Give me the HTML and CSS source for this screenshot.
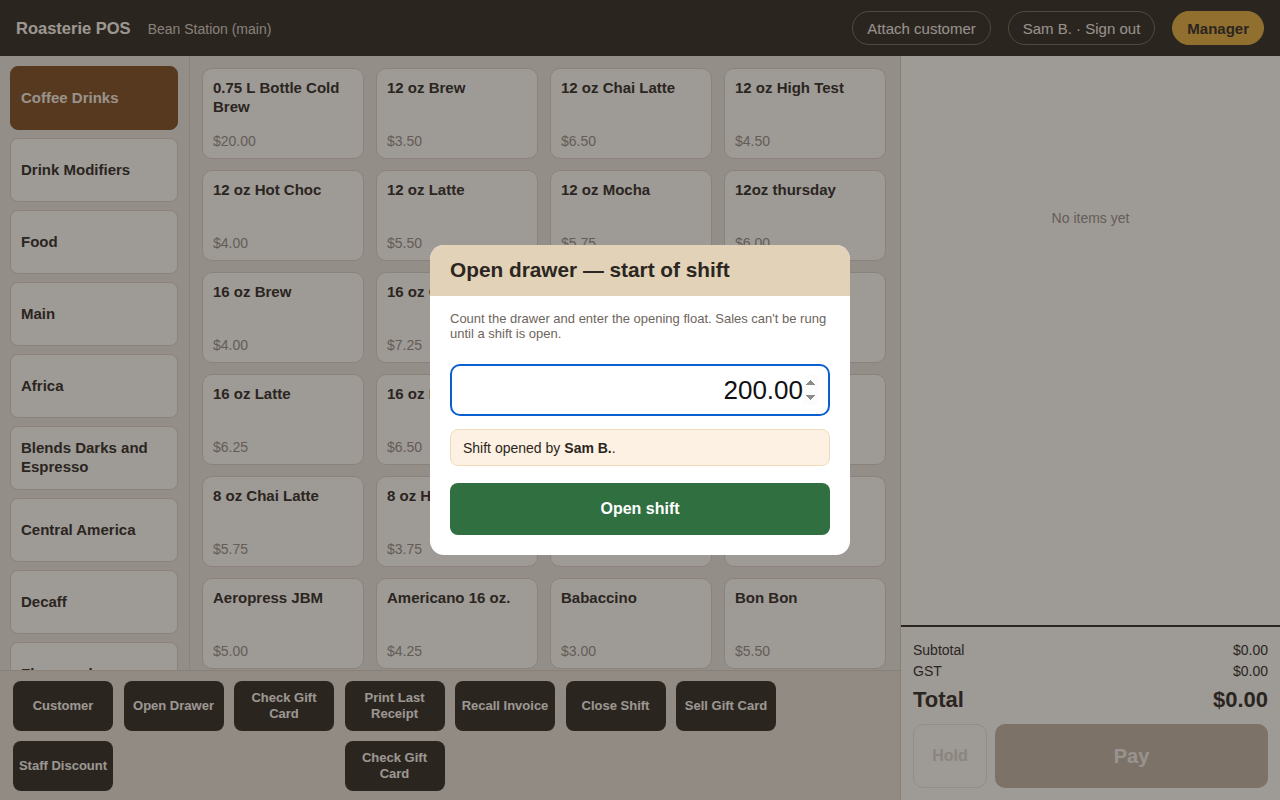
FILE: index.html
```html
<!DOCTYPE html>
<html lang="en">
<head>
    <meta charset="UTF-8">
    <meta name="viewport" content="width=device-width, initial-scale=1.0">
    <title>Roasterie POS</title>
    <link rel="stylesheet" href="styles.css">
</head>
<body>
    <header class="topBar">
        <div class="brand">
            <h1>Roasterie POS</h1>
            <span class="station">Bean Station (main)</span>
        </div>
        <div class="topActions">
            <button class="pill">Attach customer</button>
            <button class="pill">Sam B. · Sign out</button>
            <button class="pill manager">Manager</button>
        </div>
    </header>

    <div class="workArea">
        <div class="leftSide">
            <div class="catalog">
                <nav class="categories">
                    <button class="category active">Coffee Drinks</button>
                    <button class="category">Drink Modifiers</button>
                    <button class="category">Food</button>
                    <button class="category">Main</button>
                    <button class="category">Africa</button>
                    <button class="category">Blends Darks and Espresso</button>
                    <button class="category">Central America</button>
                    <button class="category">Decaff</button>
                    <button class="category">Flavoured</button>
                    <button class="category">South America</button>
                </nav>
                <div class="products">
                    <div class="product"><p class="name">0.75 L Bottle Cold Brew</p><p class="price">$20.00</p></div>
                    <div class="product"><p class="name">12 oz Brew</p><p class="price">$3.50</p></div>
                    <div class="product"><p class="name">12 oz Chai Latte</p><p class="price">$6.50</p></div>
                    <div class="product"><p class="name">12 oz High Test</p><p class="price">$4.50</p></div>

                    <div class="product"><p class="name">12 oz Hot Choc</p><p class="price">$4.00</p></div>
                    <div class="product"><p class="name">12 oz Latte</p><p class="price">$5.50</p></div>
                    <div class="product"><p class="name">12 oz Mocha</p><p class="price">$5.75</p></div>
                    <div class="product"><p class="name">12oz thursday</p><p class="price">$6.00</p></div>

                    <div class="product"><p class="name">16 oz Brew</p><p class="price">$4.00</p></div>
                    <div class="product"><p class="name">16 oz Chai Latte</p><p class="price">$7.25</p></div>
                    <div class="product"><p class="name">16 oz High Test</p><p class="price">$5.00</p></div>
                    <div class="product"><p class="name">16 oz Hot Choc</p><p class="price">$4.75</p></div>

                    <div class="product"><p class="name">16 oz Latte</p><p class="price">$6.25</p></div>
                    <div class="product"><p class="name">16 oz Mocha</p><p class="price">$6.50</p></div>
                    <div class="product"><p class="name">20 oz Brew</p><p class="price">$4.50</p></div>
                    <div class="product"><p class="name">20 oz Latte</p><p class="price">$7.00</p></div>

                    <div class="product"><p class="name">8 oz Chai Latte</p><p class="price">$5.75</p></div>
                    <div class="product"><p class="name">8 oz Hot Choc</p><p class="price">$3.75</p></div>
                    <div class="product"><p class="name">8 oz Latte</p><p class="price">$4.75</p></div>
                    <div class="product"><p class="name">8 oz Mocha</p><p class="price">$5.00</p></div>

                    <div class="product"><p class="name">Aeropress JBM</p><p class="price">$5.00</p></div>
                    <div class="product"><p class="name">Americano 16 oz.</p><p class="price">$4.25</p></div>
                    <div class="product"><p class="name">Babaccino</p><p class="price">$3.00</p></div>
                    <div class="product"><p class="name">Bon Bon</p><p class="price">$5.50</p></div>
                </div>
            </div>

            <div class="actionBar">
                <button class="action">Customer</button>
                <button class="action">Open Drawer</button>
                <button class="action">Check Gift Card</button>
                <button class="action">Print Last Receipt</button>
                <button class="action">Recall Invoice</button>
                <button class="action">Close Shift</button>
                <button class="action">Sell Gift Card</button>
                <button class="action">Staff Discount</button>
                <button class="action colFour">Check Gift Card</button>
            </div>
        </div>

        <aside class="ticket">
            <div class="lines">
                <p class="empty">No items yet</p>
            </div>
            <div class="totals">
                <div class="row"><span>Subtotal</span><span>$0.00</span></div>
                <div class="row"><span>GST</span><span>$0.00</span></div>
                <div class="row total"><span>Total</span><span>$0.00</span></div>
                <div class="payRow">
                    <button class="hold" disabled>Hold</button>
                    <button class="pay" disabled>Pay</button>
                </div>
            </div>
        </aside>
    </div>

    <div class="overlay">
        <div class="modal">
            <div class="modalHead">
                <h2>Open drawer — start of shift</h2>
            </div>
            <div class="modalBody">
                <p class="hint">Count the drawer and enter the opening float. Sales can't be rung until a shift is open.</p>
                <input class="floatInput" type="number" step="0.01" value="200.00" autofocus>
                <div class="note">Shift opened by <b>Sam B.</b>.</div>
                <button class="openShift">Open shift</button>
            </div>
        </div>
    </div>
</body>
</html>
```

FILE: styles.css
```css
*{
    padding: 0px;
    margin: 0px;
    box-sizing: border-box;
}
body{
    width: 100%;
    height: 100vh;
    overflow: hidden;
    font-family: "Liberation Sans", Arial, sans-serif;
    color: #2b2621;
    display: flex;
    flex-direction: column;
}
button{
    font-family: inherit;
    cursor: pointer;
}

/* top bar */
.topBar{
    height: 56px;
    flex-shrink: 0;
    background-color: #2b2621;
    display: flex;
    align-items: center;
    justify-content: space-between;
    padding: 0 16px;
}
.brand{
    display: flex;
    align-items: baseline;
    gap: 17px;
}
.brand > h1{
    font-size: 16.5px;
    font-weight: bold;
    color: #fbf7f1;
}
.station{
    font-size: 14px;
    color: #d6cec2;
}
.topActions{
    display: flex;
    gap: 17px;
}
.pill{
    height: 34px;
    padding: 0 14px;
    border-radius: 17px;
    border: 1px solid #6e6862;
    background-color: transparent;
    color: #f2ede6;
    font-size: 15px;
}
.pill.manager{
    background-color: #e6ae3c;
    border-color: #e6ae3c;
    color: #2b2621;
    font-weight: bold;
}

/* main work area */
.workArea{
    flex: 1;
    display: flex;
    min-height: 0;
}
.leftSide{
    width: 900px;
    display: flex;
    flex-direction: column;
    background-color: #ece7e0;
}
.catalog{
    flex: 1;
    min-height: 0;
    display: flex;
    overflow: hidden;
}
.categories{
    width: 190px;
    flex-shrink: 0;
    border-right: 1px solid #dcd3c8;
    padding: 10px 11px 0 10px;
    display: flex;
    flex-direction: column;
    gap: 8px;
}
.category{
    height: 64px;
    flex-shrink: 0;
    text-align: left;
    padding: 0 10px 2px 10px;
    border-radius: 8px;
    border: 1px solid #ddd3c7;
    background-color: #fffdfa;
    color: #2b2621;
    font-size: 15px;
    font-weight: bold;
    line-height: 19px;
}
.category.active{
    background-color: #7a4a1c;
    border-color: #7a4a1c;
    color: #f6efe6;
}
.products{
    flex: 1;
    padding: 12px 12px 0 12px;
    display: grid;
    grid-template-columns: repeat(4, 162px);
    grid-auto-rows: 91px;
    gap: 11px 12px;
    align-content: start;
}
.product{
    border: 1px solid #ddd3c7;
    border-radius: 10px;
    background-color: #fffdfa;
    padding: 9px 10px 9px 10px;
    display: flex;
    flex-direction: column;
    justify-content: space-between;
}
.name{
    font-size: 15px;
    font-weight: bold;
    line-height: 19px;
}
.price{
    font-size: 14px;
    color: #948c84;
}

/* action bar */
.actionBar{
    height: 130px;
    flex-shrink: 0;
    border-top: 1px solid #d8cfc3;
    background-color: #e9e2d8;
    padding: 10px 13px 0 13px;
    display: grid;
    grid-template-columns: repeat(7, 100px);
    grid-auto-rows: 50px;
    gap: 10px 10.5px;
}
.action{
    border: none;
    border-radius: 8px;
    background-color: #2b2621;
    color: #fbf7f1;
    font-size: 13px;
    font-weight: bold;
    line-height: 16px;
    padding: 0 4px;
}
.colFour{
    grid-column: 4;
}

/* ticket */
.ticket{
    flex: 1;
    border-left: 1px solid #d8cfc3;
    background-color: #fffdfa;
    display: flex;
    flex-direction: column;
}
.lines{
    flex: 1;
    text-align: center;
    padding-top: 154px;
}
.empty{
    font-size: 14px;
    color: #978f87;
}
.totals{
    border-top: 2px solid #2b2621;
    padding: 13px 12px 12px 12px;
}
.row{
    display: flex;
    justify-content: space-between;
    font-size: 14px;
    line-height: 21px;
}
.row.total{
    font-size: 22px;
    font-weight: bold;
    line-height: 28px;
    margin-top: 4px;
}
.payRow{
    display: flex;
    gap: 8px;
    margin-top: 10px;
}
.hold{
    width: 74px;
    height: 64px;
    border-radius: 10px;
    border: 1px solid #eae5df;
    background-color: #fffdfa;
    color: #dcd6cf;
    font-size: 16px;
    font-weight: bold;
}
.pay{
    flex: 1;
    height: 64px;
    border-radius: 10px;
    border: none;
    background-color: #c0b4a4;
    color: #f5f1ec;
    font-size: 20px;
    font-weight: bold;
}

/* modal */
.overlay{
    position: fixed;
    inset: 0;
    background-color: rgba(43, 38, 33, 0.46);
    display: flex;
    align-items: center;
    justify-content: center;
}
.modal{
    width: 420px;
    background-color: white;
    border-radius: 14px;
    overflow: hidden;
}
.modalHead{
    height: 51px;
    background-color: #e2d2b7;
    display: flex;
    align-items: center;
    padding: 0 20px 1px 20px;
}
.modalHead > h2{
    font-size: 20.8px;
    font-weight: bold;
    color: #2b2621;
}
.modalBody{
    padding: 15px 20px 20px 20px;
}
.hint{
    font-size: 13px;
    line-height: 15px;
    color: #6e655c;
}
.floatInput{
    display: block;
    width: 100%;
    height: 52px;
    margin-top: 23px;
    border: 2px solid #0b5fd0;
    border-radius: 10px;
    outline: none;
    padding: 0 10px;
    text-align: right;
    font-family: "Liberation Sans", Arial, sans-serif;
    font-size: 26px;
    color: #111;
}
.note{
    margin-top: 13px;
    height: 37px;
    padding: 0 12px;
    display: flex;
    align-items: center;
    border: 1px solid #f0dcb8;
    border-radius: 8px;
    background-color: #fcf1e2;
    font-size: 14px;
    color: #2b2621;
}
.note > b{
    margin-left: 4px;
}
.openShift{
    display: block;
    width: 100%;
    height: 52px;
    margin-top: 17px;
    border: none;
    border-radius: 8px;
    background-color: #2f6f40;
    color: white;
    font-size: 16px;
    font-weight: bold;
}
```
